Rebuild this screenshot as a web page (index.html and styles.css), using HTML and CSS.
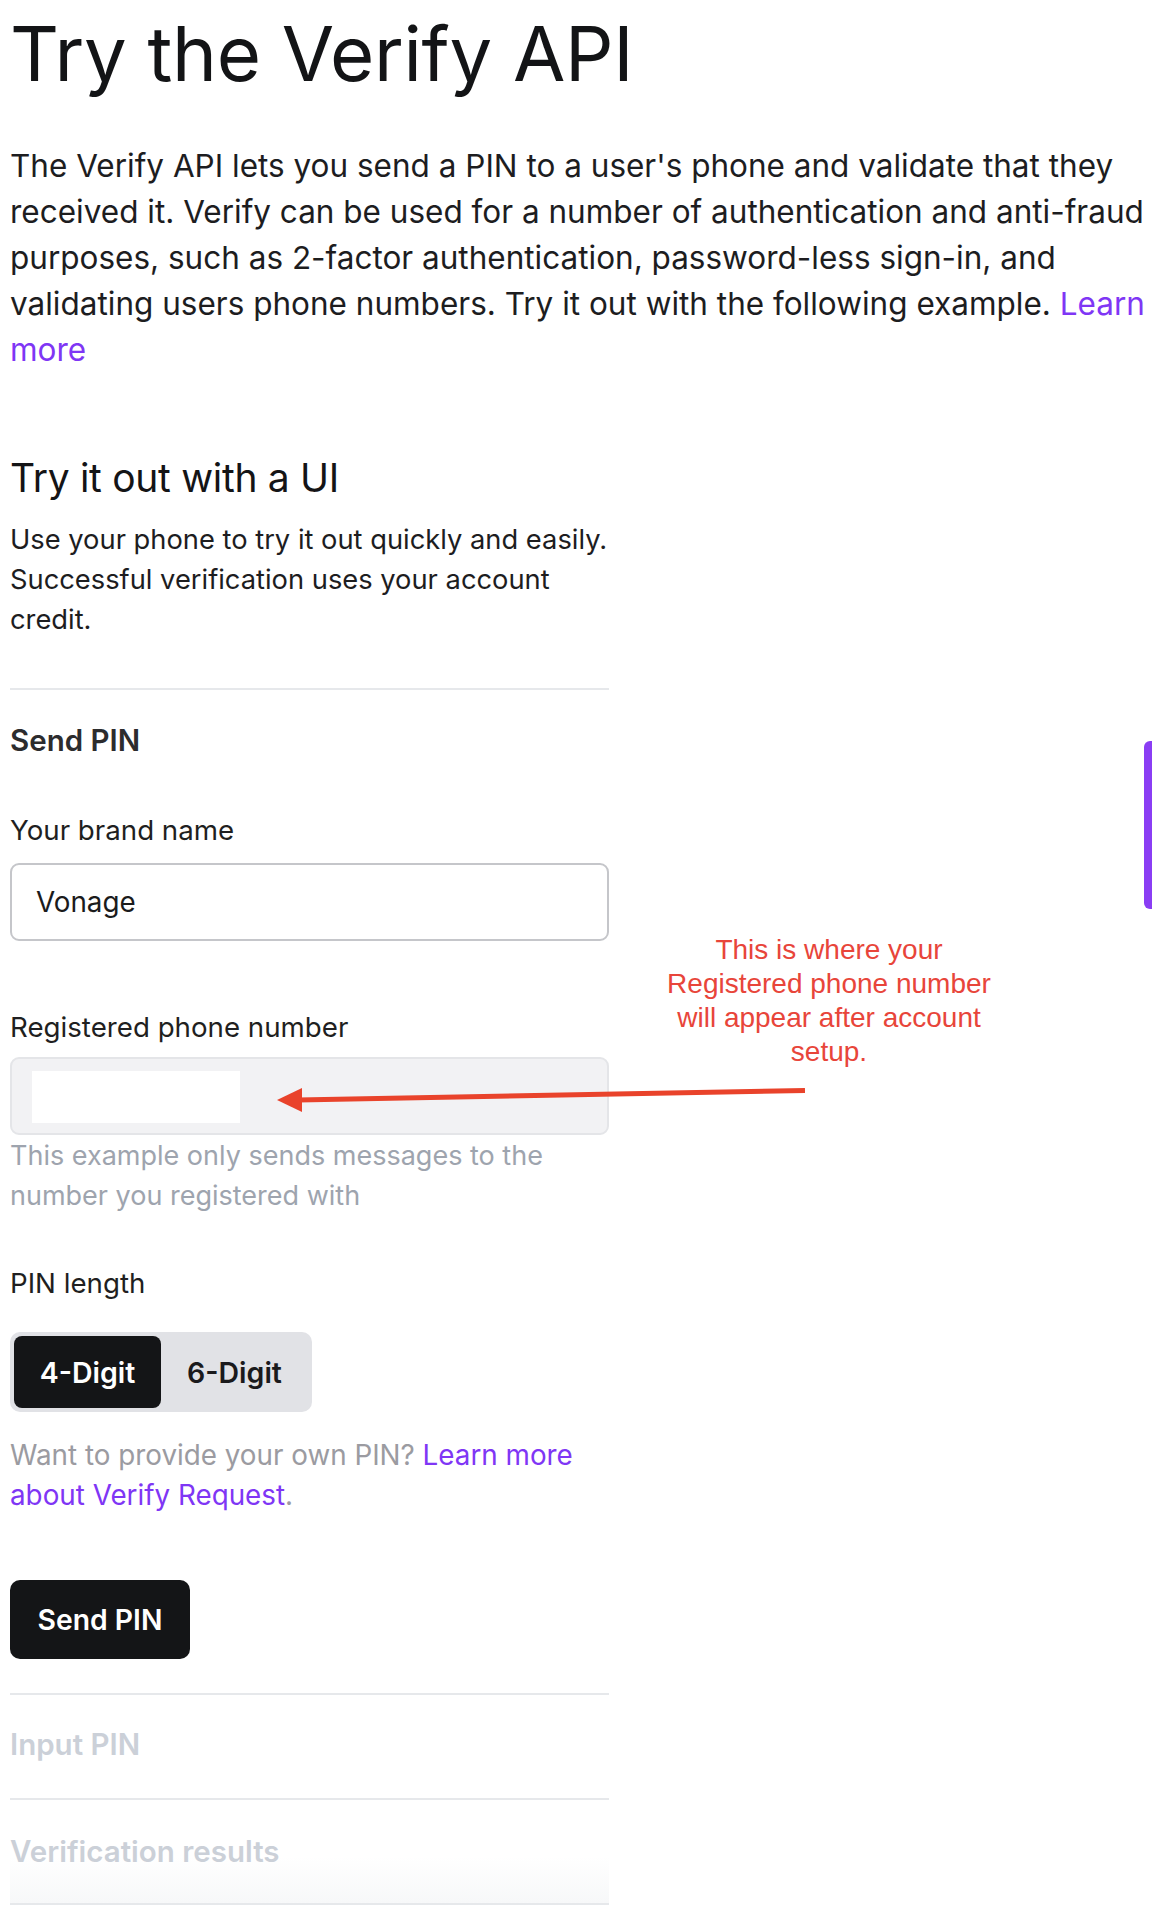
FILE: index.html
```html
<!DOCTYPE html>
<html lang="en">
<head>
<meta charset="utf-8">
<title>Try the Verify API</title>
<link rel="stylesheet" href="styles.css">
</head>
<body>
<main class="page">
  <h1 class="title">Try the Verify API</h1>
  <p class="intro">The Verify API lets you send a PIN to a user's phone and validate that they received it. Verify can be used for a number of authentication and anti-fraud purposes, such as 2-factor authentication, password-less sign-in, and validating users phone numbers. Try it out with the following example. <a class="link" href="#">Learn more</a></p>

  <section class="tryout">
    <h2 class="tryout-title">Try it out with a UI</h2>
    <p class="tryout-desc">Use your phone to try it out quickly and easily. Successful verification uses your account credit.</p>

    <div class="steps">
      <div class="step step-active">
        <h3 class="step-title">Send PIN</h3>

        <label class="field-label field-brand" for="brand">Your brand name</label>
        <input class="text-input" id="brand" type="text" value="Vonage">

        <label class="field-label field-phone">Registered phone number</label>
        <div class="readonly-input"><span class="redacted"></span></div>
        <p class="hint">This example only sends messages to the number you registered with</p>

        <span class="field-label field-pin">PIN length</span>
        <div class="segmented">
          <button class="segment segment-on" type="button">4-Digit</button>
          <button class="segment" type="button">6-Digit</button>
        </div>
        <p class="own-pin">Want to provide your own PIN? <a class="link" href="#">Learn more about Verify Request</a>.</p>

        <button class="primary-btn" type="button">Send PIN</button>
      </div>
      <div class="step step-disabled step-input">
        <h3 class="step-title">Input PIN</h3>
      </div>
      <div class="step step-disabled step-results">
        <h3 class="step-title">Verification results</h3>
      </div>
    </div>
  </section>

  <div class="annotation">This is where your<br>Registered phone number<br>will appear after account<br>setup.</div>
  <svg class="annotation-arrow" width="545" height="40" viewBox="0 0 545 40" aria-hidden="true">
    <line x1="28" y1="22" x2="535" y2="12.5" stroke="#e9432b" stroke-width="5"/>
    <polygon points="7,22 32,10 32,34" fill="#e9432b"/>
  </svg>

  <div class="side-tab"></div>
</main>
</body>
</html>
```

FILE: styles.css
```css
html, body {
  margin: 0;
  padding: 0;
  background: #ffffff;
}

body {
  font-family: Inter, "Liberation Sans", sans-serif;
  color: #1b1b1c;
  width: 1152px;
  min-height: 1906px;
  overflow: hidden;
}

.page {
  position: relative;
  padding: 8px 0 0 10px;
  min-height: 1898px;
}

.title {
  margin: 0;
  font-size: 76px;
  line-height: 90px;
  font-weight: 400;
  letter-spacing: -0.3px;
  color: #131416;
}

.intro {
  margin: 45px 0 0;
  width: 1142px;
  font-size: 31.5px;
  line-height: 46px;
  color: #1d1d1f;
}

.link {
  color: #7f36f5;
  text-decoration: none;
}

.tryout-title {
  margin: 81px 0 0;
  font-size: 39px;
  line-height: 48px;
  font-weight: 400;
  letter-spacing: -0.3px;
  color: #141416;
}

.tryout-desc {
  margin: 18px 0 0;
  width: 620px;
  font-size: 27.3px;
  line-height: 40px;
  color: #1d1d1f;
}

.steps {
  width: 599px;
  margin-top: 48px;
}

.step {
  border-top: 2px solid #e6e8eb;
  display: flex;
  flex-direction: column;
  align-items: flex-start;
}

.step-title {
  margin: 0;
  font-size: 29.5px;
  line-height: 36px;
  font-weight: 600;
  color: #2c2c2e;
}

.step-active {
  padding: 32px 0 34px;
}

.step-input {
  padding: 31px 0 36px;
}

.step-results {
  padding: 33px 0 34px;
  border-bottom: 2px solid #e6e8eb;
  background: linear-gradient(to bottom, #ffffff 0%, #ffffff 55%, #f7f8f9 100%);
}

.step-disabled .step-title {
  color: #cbd0d8;
}

.field-label {
  display: block;
  font-size: 27.7px;
  line-height: 32px;
  color: #1f1f21;
}

.field-brand {
  margin-top: 56px;
}

.field-phone {
  margin-top: 70px;
}

.field-pin {
  margin-top: 51px;
}

.text-input {
  box-sizing: border-box;
  width: 599px;
  height: 78px;
  margin: 17px 0 0;
  padding: 0 24px;
  border: 2px solid #c5c6ca;
  border-radius: 9px;
  background: #ffffff;
  font-family: inherit;
  font-size: 27.8px;
  color: #1b1b1c;
  outline: none;
}

.readonly-input {
  box-sizing: border-box;
  width: 599px;
  height: 78px;
  margin-top: 14px;
  padding: 12px 20px;
  border: 2px solid #e4e5e8;
  border-radius: 9px;
  background: #f2f2f4;
}

.redacted {
  display: block;
  width: 208px;
  height: 52px;
  background: #ffffff;
}

.hint {
  margin: 1px 0 0;
  font-size: 27px;
  line-height: 40px;
  color: #9ea4ae;
}

.segmented {
  display: flex;
  margin-top: 33px;
  padding: 4px;
  background: #e1e2e6;
  border-radius: 10px;
}

.segment {
  width: 147px;
  height: 72px;
  border: 0;
  border-radius: 8px;
  background: transparent;
  font-family: inherit;
  font-size: 28.5px;
  font-weight: 600;
  color: #1a1a1c;
  padding: 0;
}

.segment-on {
  background: #141517;
  color: #ffffff;
}

.own-pin {
  margin: 23px 0 0;
  font-size: 27.8px;
  line-height: 40px;
  color: #9b9ba1;
}

.primary-btn {
  margin-top: 65px;
  width: 180px;
  height: 79px;
  border: 0;
  border-radius: 10px;
  background: #141517;
  color: #ffffff;
  font-family: inherit;
  font-size: 28.3px;
  font-weight: 600;
  padding: 0;
}

.annotation {
  position: absolute;
  left: 649px;
  top: 933px;
  width: 360px;
  text-align: center;
  font-family: "Liberation Sans", Arial, sans-serif;
  font-size: 28px;
  line-height: 34px;
  color: #e8453a;
}

.annotation-arrow {
  position: absolute;
  left: 270px;
  top: 1078px;
}

.side-tab {
  position: absolute;
  right: 0;
  top: 741px;
  width: 8px;
  height: 168px;
  background: #8a3df4;
  border-radius: 6px 0 0 6px;
}
```
